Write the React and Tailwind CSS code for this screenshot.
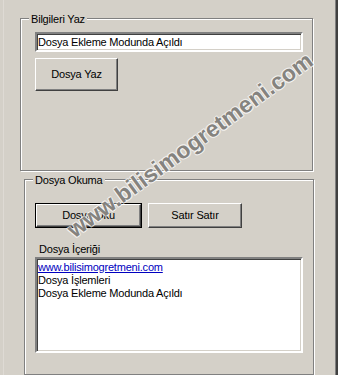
import React from 'react';

const raised = 'border border-t-white border-l-white border-b-[#404040] border-r-[#404040] [box-shadow:inset_-1px_-1px_0_#808080]';
const sunken = 'border-2 border-t-[#808080] border-l-[#808080] border-b-white border-r-white [box-shadow:inset_1px_1px_0_#404040,inset_-1px_-1px_0_#d4d0c8] bg-white';
const etched = 'border border-[#808080] [box-shadow:inset_1px_1px_0_#fff,1px_1px_0_#fff]';

const GroupBox = ({ title, className, children }) => (
  <div className={`relative ${etched} ${className}`}>
    <span className="absolute left-[8px] top-[-6px] px-[2px] bg-[#d4d0c8] leading-[13px]">{title}</span>
    {children}
  </div>
);

const App = () => {
  return (
    <div className="relative w-[338px] h-[375px] overflow-hidden bg-[#d4d0c8] flex font-['Liberation_Sans',Arial,sans-serif] text-[11px] tracking-[-0.2px] text-black">
      <div className="w-[3px]" />
      <div className="w-[1px] bg-[#dedad4]" />

      <div className="flex-1 flex flex-col">
        {/* Bilgileri Yaz */}
        <GroupBox title="Bilgileri Yaz" className="ml-[16px] mt-[18px] w-[293px] h-[156px] pl-[14px] pt-[13px] flex flex-col">
          <div className={`${sunken} w-[268px] h-[20px] flex items-center pl-[1px]`}>
            Dosya Ekleme Modunda Açıldı
          </div>
          <button className={`${raised} mt-[6px] w-[83px] h-[33px] flex items-center justify-center`}>
            Dosya Yaz
          </button>
        </GroupBox>

        {/* Dosya Okuma */}
        <GroupBox title="Dosya Okuma" className="ml-[20px] mt-[8px] w-[290px] h-[200px] pl-[10px] pt-[23px] flex flex-col">
          <div className="flex gap-[6px]">
            <div className="border border-black w-[107px] h-[25px] flex">
              <button className={`${raised} flex-1 flex items-center justify-center`}>Dosya Oku</button>
            </div>
            <button className={`${raised} w-[94px] h-[25px] flex items-center justify-center`}>Satır Satır</button>
          </div>
          <span className="ml-[4px] mt-[15px] leading-[13px]">Dosya İçeriği</span>
          <div className={`${sunken} mt-[1px] w-[268px] h-[96px] pl-[1px] pt-[2px] flex flex-col leading-[13px]`}>
            <span className="text-[#0000c0] underline">www.bilisimogretmeni.com</span>
            <span>Dosya İşlemleri</span>
            <span>Dosya Ekleme Modunda Açıldı</span>
          </div>
        </GroupBox>
      </div>

      <div className="w-[1px] bg-[#808080]" />
      <div className="w-[2px] bg-[#404040]" />

      {/* watermark */}
      <div className="absolute left-[190px] top-[145px] -translate-x-1/2 -translate-y-1/2 -rotate-[36deg] whitespace-nowrap font-bold text-[23px] tracking-normal text-[#85837f] [text-shadow:1px_1px_0_rgba(255,255,255,0.6),-1px_-1px_0_rgba(255,255,255,0.6),1px_-1px_0_rgba(255,255,255,0.6),-1px_1px_0_rgba(255,255,255,0.6)] pointer-events-none">
        www.bilisimogretmeni.com
      </div>
    </div>
  );
};

export default App;
